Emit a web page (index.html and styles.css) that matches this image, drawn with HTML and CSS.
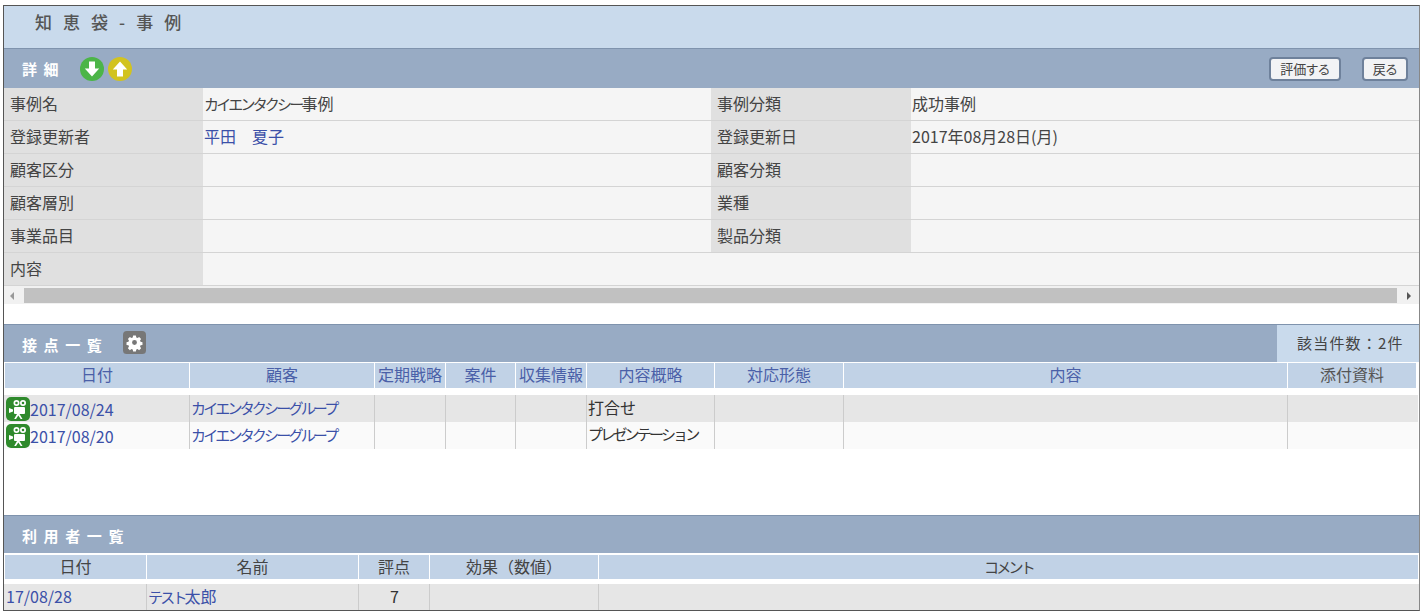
FILE: index.html
```html
<!DOCTYPE html>
<html lang="ja">
<head>
<meta charset="utf-8">
<title>知恵袋 - 事例</title>
<link rel="stylesheet" href="styles.css">
</head>
<body>
<div class="frame">
  <h1 class="page-title">知 恵 袋 - 事 例</h1>

  <div class="bar bar-detail">
    <span class="bar-title">詳 細</span>
    <span class="round-icons">
      <svg class="round-icon" viewBox="0 0 24 24"><circle cx="12" cy="12" r="12" fill="#4cb548"/><path d="M9 4.500h6v7h4.200L12 19.500 4.800 11.500H9z" fill="#fff"/></svg>
      <svg class="round-icon" viewBox="0 0 24 24"><circle cx="12" cy="12" r="12" fill="#d2c31f"/><path d="M9 19.500h6v-7h4.200L12 4.500 4.800 12.500H9z" fill="#fff"/></svg>
    </span>
    <span class="bar-actions">
      <button class="btn btn-wide">評価する</button>
      <button class="btn">戻る</button>
    </span>
  </div>

  <div class="detail">
    <div class="d-label">事例名</div><div class="d-value"><span class="kana">カイエンタクシー</span>事例</div>
    <div class="d-label">事例分類</div><div class="d-value">成功事例</div>
    <div class="d-label">登録更新者</div><div class="d-value"><a class="link" href="#">平田　夏子</a></div>
    <div class="d-label">登録更新日</div><div class="d-value">2017年08月28日(月)</div>
    <div class="d-label">顧客区分</div><div class="d-value"></div>
    <div class="d-label">顧客分類</div><div class="d-value"></div>
    <div class="d-label">顧客層別</div><div class="d-value"></div>
    <div class="d-label">業種</div><div class="d-value"></div>
    <div class="d-label">事業品目</div><div class="d-value"></div>
    <div class="d-label">製品分類</div><div class="d-value"></div>
    <div class="d-label">内容</div><div class="d-value d-span"></div>
  </div>

  <div class="scroll">
    <span class="arrow arrow-left"></span>
    <span class="thumb"></span>
    <span class="arrow arrow-right"></span>
  </div>

  <div class="bar bar-contact">
    <span class="bar-title low">接 点 一 覧</span>
    <svg class="gear" viewBox="0 0 24 24"><rect width="24" height="24" rx="4" fill="#777"/><path fill="#fff" fill-rule="evenodd" d="M10.300 3.500h3.400l.5 2.400 1.500.6 2-1.300 2.400 2.400-1.300 2 .6 1.500 2.400.5v3.400l-2.400.5-.6 1.500 1.300 2-2.400 2.400-2-1.300-1.500.6-.5 2.400h-3.400l-.5-2.400-1.500-.6-2 1.300-2.400-2.400 1.300-2-.6-1.500-2.400-.5v-3.400l2.400-.5.6-1.500-1.300-2 2.400-2.400 2 1.300 1.500-.6zM12 9a3 3 0 1 0 0 6 3 3 0 0 0 0-6z" transform="translate(1.800 1.800) scale(.85)"/></svg>
    <span class="count">該当件数：2件</span>
  </div>

  <div class="grid grid-contact head">
    <div>日付</div><div>顧客</div><div>定期戦略</div><div>案件</div><div>収集情報</div><div>内容概略</div><div>対応形態</div><div>内容</div><div>添付資料</div>
  </div>
  <div class="grid grid-contact row row-grey">
    <div class="date-cell"><svg class="cam" viewBox="0 0 24 24"><use href="#cam"/></svg><a class="link" href="#">2017/08/24</a></div>
    <div><a class="link kana" href="#">カイエンタクシーグループ</a></div><div></div><div></div><div></div><div>打合せ</div><div></div><div></div><div></div>
  </div>
  <div class="grid grid-contact row row-white">
    <div class="date-cell"><svg class="cam" viewBox="0 0 24 24"><use href="#cam"/></svg><a class="link" href="#">2017/08/20</a></div>
    <div><a class="link kana" href="#">カイエンタクシーグループ</a></div><div></div><div></div><div></div><div class="kana">プレゼンテーション</div><div></div><div></div><div></div>
  </div>

  <div class="bar bar-users">
    <span class="bar-title low">利 用 者 一 覧</span>
  </div>
  <div class="grid grid-users head">
    <div>日付</div><div>名前</div><div>評点</div><div>効果（数値）</div><div class="kana">コメント</div>
  </div>
  <div class="grid grid-users row row-user">
    <div><a class="link" href="#">17/08/28</a></div><div><a class="link" href="#"><span class="kana">テスト</span>太郎</a></div><div class="center">7</div><div></div><div></div>
  </div>
</div>
<svg class="defs" width="0" height="0">
  <symbol id="cam" viewBox="0 0 24 24">
    <rect width="24" height="24" rx="5" fill="#2f8a2c"/>
    <g fill="#fff">
      <path fill-rule="evenodd" d="M10.500 3a3 3 0 1 0 0 6 3 3 0 0 0 0-6zm0 1.700a1.300 1.300 0 1 1 0 2.600 1.300 1.300 0 0 1 0-2.600zM17 3a3 3 0 1 0 0 6 3 3 0 0 0 0-6zm0 1.700a1.300 1.300 0 1 1 0 2.600 1.300 1.300 0 0 1 0-2.600z"/>
      <rect x="8" y="10" width="11" height="7" rx="1"/>
      <path d="M3 11l4 1.500v2L3 16zM11 17h2.500l3 5h-1.800L12.300 18.500 10 22H8.200z"/>
    </g>
  </symbol>
</svg>
</body>
</html>
```
FILE: styles.css
```css
* { box-sizing: border-box; }
html, body { margin: 0; padding: 0; background: #fff; overflow: hidden; }
body {
  font-family: "Noto Sans CJK JP", "Liberation Sans", sans-serif;
  font-size: 16px;
  color: #444;
}
.frame {
  width: 1417px;
  height: 606px;
  margin: 5px 0 0 3px;
  border: 1px solid #555;
  border-right-color: #888;
  overflow: hidden;
  display: flex;
  flex-direction: column;
}
.page-title {
  flex: none;
  margin: 0;
  height: 42px;
  padding: 3px 0 0 31px;
  font-size: 17px;
  line-height: 26px;
  font-weight: 500;
  letter-spacing: 3.6px;
  color: #555;
  background: #c9daec;
  white-space: pre;
}
.bar {
  display: flex;
  align-items: center;
  background: #98abc4;
  border-top: 1px solid #7f93ad;
  flex: none;
}
.bar-detail { height: 40px; padding-left: 18px; }
.bar-contact { height: 38px; padding-left: 18px; margin-top: 20px; }
.bar-users { height: 38px; padding-left: 18px; margin-top: 66px; }
.bar-title {
  color: #fff;
  font-size: 15px;
  font-weight: 700;
  letter-spacing: 1.600px;
  white-space: pre;
}
.bar-title.low { padding-top: 2px; }
.round-icons { display: flex; gap: 4px; margin-left: 20px; }
.round-icon { width: 24px; height: 24px; flex: none; }
.bar-actions { margin-left: auto; display: flex; gap: 21px; padding-right: 11px; }
.btn {
  width: 46px;
  height: 24px;
  padding: 0;
  font: inherit;
  font-size: 13px;
  line-height: 20px;
  color: #444;
  background: #f2f3f5;
  border: 2px solid #6e819b;
  border-radius: 4px;
  font-feature-settings: "palt";
}
.btn-wide { width: 72px; }
.detail {
  display: grid;
  grid-template-columns: 199px 508px 200px 508px;
  grid-auto-rows: 33px;
  flex: none;
}
.d-label, .d-value {
  padding-left: 6px;
  line-height: 30px;
  border-bottom: 1px solid #d4d4d4;
}
.d-label { background: #e0e0e0; }
.d-value { background: #f5f5f5; padding-left: 1px; }
.d-span { grid-column: 2 / 5; }
.link { color: #3b50a8; text-decoration: none; }
.scroll {
  height: 18px;
  background: #f1f1f1;
  display: flex;
  align-items: center;
  flex: none;
}
.thumb { flex: 1; height: 15px; background: #c1c1c1; }
.arrow { width: 20px; flex: none; height: 15px; }
.arrow-right { width: 22px; }
.arrow::before {
  content: "";
  display: block;
  width: 0;
  height: 0;
  margin-top: 4px;
  border-top: 4px solid transparent;
  border-bottom: 4px solid transparent;
}
.arrow-left::before { margin-left: 6px; border-right: 4px solid #999; }
.arrow-right::before { margin-left: 10px; border-left: 4px solid #555; }
.gear { width: 23px; height: 23px; margin: -2px 0 0 20px; flex: none; }
.count {
  margin-left: auto;
  align-self: stretch;
  width: 142px;
  padding-left: 20px;
  line-height: 36px;
  font-size: 15px;
  background: #c9daec;
  color: #444;
  letter-spacing: 1.200px;
}
.grid { display: grid; flex: none; }
.grid-contact {
  grid-template-columns: 185px 185px 71px 70px 71px 128px 129px 444px 129px;
  padding-left: 1px;
  margin-right: 1px;
}
.grid-users {
  grid-template-columns: 142px 212px 71px 169px 820px;
  padding-left: 1px;
}
.head { background: #fff; }
.head > div {
  margin-right: 1px;
  background: #c1d2e6;
  color: #4a60a8;
  font-size: 16px;
  line-height: 23px;
  text-align: center;
  overflow: hidden;
  white-space: nowrap;
}
.grid-contact.head { height: 33px; padding: 1px 0 7px 1px; }
.grid-users.head { height: 31px; padding: 2px 0 5px 1px; }
.grid-users.head > div { color: #444; }
.grid-contact.head > div:last-child { color: #555; }
.head > .kana { font-size: 15px; letter-spacing: -2.800px; }
.row { height: 27px; line-height: 24px; font-size: 16px; color: #333; }
.row > div { border-right: 1px solid #ccc; white-space: nowrap; overflow: hidden; padding-left: 1px; }
.row > div:last-child { border-right: 0; }
.row-grey { background: #e6e6e6; }
.row-white { background: #fafafa; }
.row-user { background: #e6e6e6; height: 26px; }
.kana { font-size: 15px; letter-spacing: -2.800px; }
.date-cell { display: flex; align-items: center; }
.cam { width: 24px; height: 24px; flex: none; }
.center { text-align: center; }
.defs { position: absolute; }
```
